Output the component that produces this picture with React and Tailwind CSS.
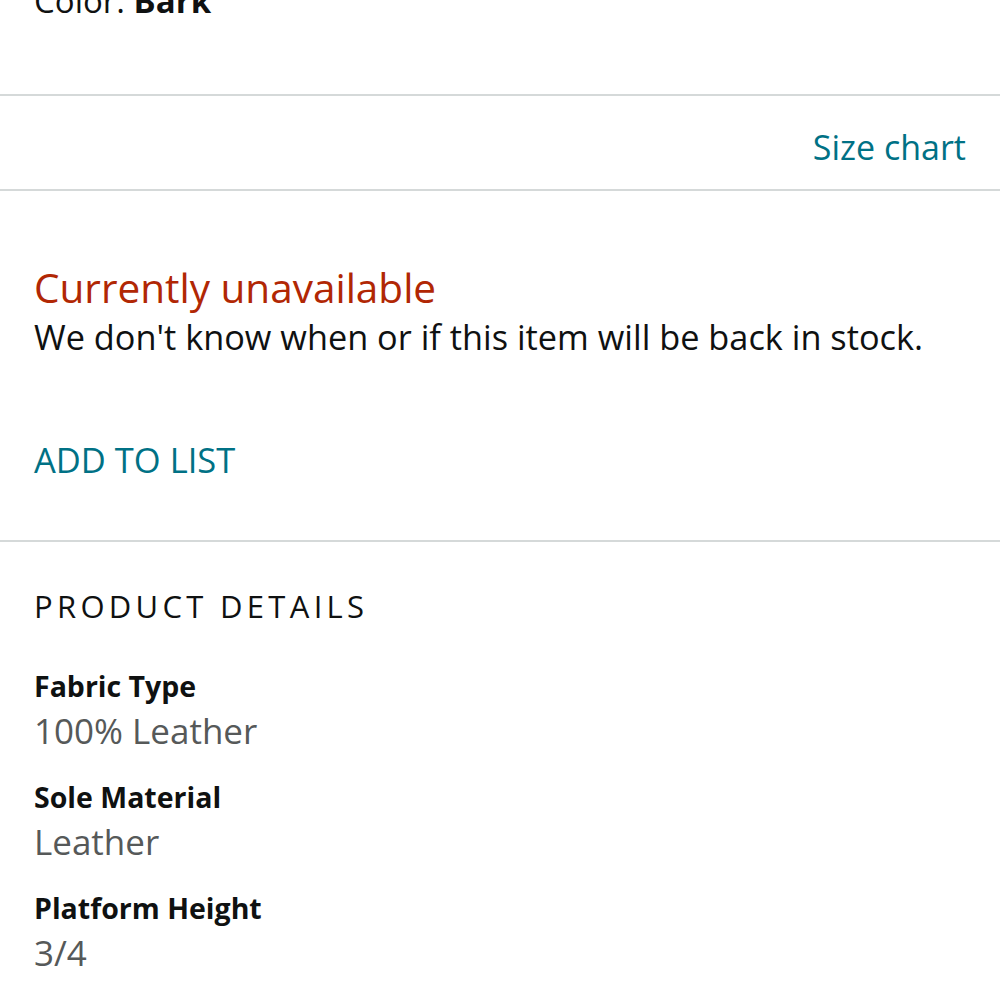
import React from 'react';

const details = [
    { label: 'Fabric Type', value: '100% Leather' },
    { label: 'Sole Material', value: 'Leather' },
    { label: 'Platform Height', value: '3/4' },
];

function App() {
    return (
        <div className="min-h-screen bg-white text-[#0f1111] font-['Open_Sans',sans-serif] overflow-hidden">
            <div className="h-[94px] px-[34px] overflow-hidden">
                <div className="mt-[-19px] text-[33px] leading-[40px]">
                    Color: <span className="font-bold">Bark</span>
                </div>
            </div>
            <div className="h-[2px] bg-[#d5d9d9]" />
            <div className="h-[93px] px-[34px] pt-[8px] flex items-center justify-end">
                <a className="text-[34px] leading-[40px] text-[#007185]">Size chart</a>
            </div>
            <div className="h-[2px] bg-[#d5d9d9]" />
            <div className="h-[349px] px-[34px] pt-[73px]">
                <div className="text-[40.5px] leading-[48px] text-[#b12704]">Currently unavailable</div>
                <div className="text-[34.3px] leading-[44px] mt-[3px] whitespace-nowrap">We don't know when or if this item will be back in stock.</div>
                <div className="mt-[79px] text-[34.5px] leading-[44px] text-[#007185]">ADD TO LIST</div>
            </div>
            <div className="h-[2px] bg-[#d5d9d9]" />
            <div className="px-[34px] pt-[44px]">
                <div className="text-[31px] leading-[40px] tracking-[4.3px]">PRODUCT DETAILS</div>
                <div className="mt-[40px] flex flex-col gap-[24px]">
                    {details.map((d) => (
                        <div key={d.label}>
                            <div className="text-[28.5px] leading-[40px] font-bold">{d.label}</div>
                            <div className="text-[35px] leading-[44px] text-[#565959] mt-[3px]">{d.value}</div>
                        </div>
                    ))}
                </div>
            </div>
        </div>
    );
}

export default App;
